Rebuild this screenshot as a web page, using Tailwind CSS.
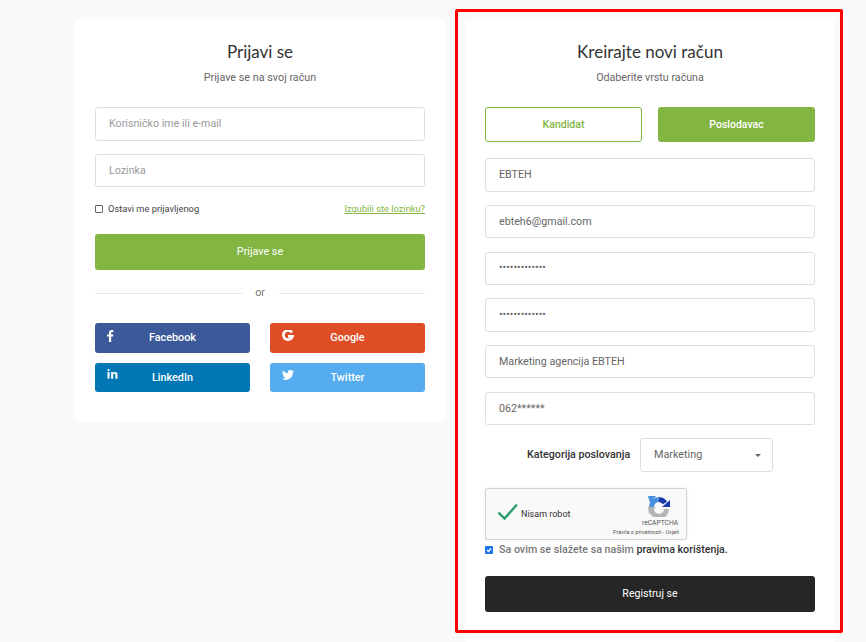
<!DOCTYPE html>
<html lang="sr">
<head>
    <meta charset="UTF-8">
    <meta name="viewport" content="width=device-width, initial-scale=1.0">
    <title>Prijava i registracija</title>
    <script src="https://cdn.jsdelivr.net/npm/@tailwindcss/browser@4"></script>
</head>
<body class="bg-[#fafafa] text-[#666] font-['Roboto',sans-serif]">

    <div class="relative h-[642px] w-[866px] overflow-hidden">
        <div class="flex items-start gap-[20px] pl-[75px] pt-[20px]">

            <!-- login -->
            <section class="h-[402px] w-[370px] rounded-[4px] bg-white px-[20px] pt-[20px]">
                <h2 class="text-center font-['Lato',sans-serif] text-[17px] leading-[24px] text-[#333]">Prijavi se</h2>
                <p class="mt-[6px] text-center text-[10.8px] leading-[16px] text-[#666]">Prijave se na svoj račun</p>

                <div class="mt-[21px] flex h-[34px] items-center rounded-[3px] border border-[#dedede] px-[13px] text-[10.7px] text-[#999]">Korisničko ime ili e-mail</div>
                <div class="mt-[13px] flex h-[33px] items-center rounded-[3px] border border-[#dedede] px-[13px] pt-px text-[10.7px] text-[#999]">Lozinka</div>

                <div class="mt-[15px] flex h-[14px] items-center justify-between text-[9.3px]">
                    <label class="flex items-center gap-[5px] text-[#444]">
                        <span class="h-[8px] w-[8px] rounded-[1px] border border-[#666] bg-white"></span>
                        Ostavi me prijavljenog
                    </label>
                    <a class="text-[#82b541] underline">Izgubili ste lozinku?</a>
                </div>

                <button class="mt-[18px] h-[36px] w-full rounded-[3px] bg-[#82b541] text-[10.8px] text-white">Prijave se</button>

                <div class="mt-[16px] flex h-[14px] items-center text-[10.7px] text-[#777]">
                    <span class="h-px flex-1 bg-[#e6e8f0]"></span>
                    <span class="w-[37px] text-center">or</span>
                    <span class="h-px flex-1 bg-[#e6e8f0]"></span>
                </div>

                <div class="mt-[23px] grid grid-cols-2 gap-x-[20px] gap-y-[10px]">
                    <a class="relative flex h-[30px] items-center justify-center rounded-[3px] bg-[#3c5a99] text-[10.8px] font-medium text-white">
                        <svg class="absolute left-[12px] top-[7px] h-[12px] w-[7px]" viewBox="0 0 8 14" fill="#fff"><path d="M2.2 14V7.7H0V5.2h2.2V3.3C2.2 1.1 3.500 0 5.400 0c.9 0 1.700.1 1.900.1v2.200H6c-1 0-1.200.5-1.200 1.200v1.700h2.500l-.3 2.500H4.800V14z"/></svg>
                        Facebook
                    </a>
                    <a class="relative flex h-[30px] items-center justify-center rounded-[3px] bg-[#de4d26] text-[10.8px] font-medium text-white">
                        <svg class="absolute left-[12px] top-[7px] h-[12px] w-[12px]" viewBox="0 0 12 12" fill="none" stroke="#fff" stroke-width="2.600"><path d="M10 2.400A4.700 4.700 0 1 0 10.600 6.400H6"/></svg>
                        Google
                    </a>
                    <a class="relative flex h-[29px] items-center justify-center rounded-[3px] bg-[#0177b5] pt-px text-[10.8px] font-medium text-white">
                        <svg class="absolute left-[12px] top-[6px] h-[10px] w-[11px]" viewBox="0 0 11 11" fill="#fff"><rect x="0" y="3.400" width="2.300" height="7.200"/><circle cx="1.150" cy="1.200" r="1.200"/><path d="M4 3.400h2.200v1c.4-.7 1.200-1.200 2.200-1.200 2 0 2.600 1.300 2.600 3.100v4.300H8.700V6.800c0-.9-.2-1.600-1.100-1.600s-1.300.7-1.300 1.600v3.800H4z"/></svg>
                        LinkedIn
                    </a>
                    <a class="relative flex h-[29px] items-center justify-center rounded-[3px] bg-[#55acee] pt-px text-[10.8px] font-medium text-white">
                        <svg class="absolute left-[12px] top-[7px] h-[10px] w-[12px]" viewBox="0 0 24 20" fill="#fff"><path d="M24 2.400c-.9.4-1.800.7-2.800.8 1-.6 1.800-1.600 2.200-2.700-1 .6-2 1-3.100 1.200A4.900 4.900 0 0 0 11.900 6.200C7.800 6 4.200 4 1.700.9c-1.300 2.300-.6 5.100 1.500 6.600-.8 0-1.600-.2-2.200-.6 0 2.400 1.700 4.400 3.900 4.900-.7.2-1.500.2-2.200.1.600 2 2.400 3.400 4.600 3.400A9.900 9.900 0 0 1 0 17.400 14 14 0 0 0 21.500 5c1-.7 1.800-1.600 2.500-2.600z"/></svg>
                        Twitter
                    </a>
                </div>
            </section>

            <!-- register -->
            <section class="h-[640px] w-[370px] rounded-[4px] bg-white px-[20px] pt-[20px]">
                <h2 class="text-center font-['Lato',sans-serif] text-[17px] leading-[24px] text-[#333]">Kreirajte novi račun</h2>
                <p class="mt-[6px] text-center text-[10.7px] leading-[16px] text-[#666]">Odaberite vrstu računa</p>

                <div class="mt-[21px] flex justify-between">
                    <button class="h-[35px] w-[157px] rounded-[3px] border border-[#82b541] bg-white text-[10.5px] font-medium text-[#82b541]">Kandidat</button>
                    <button class="h-[35px] w-[157px] rounded-[3px] bg-[#82b541] text-[10.5px] font-medium text-white">Poslodavac</button>
                </div>

                <div class="mt-[16px] flex h-[34px] items-center rounded-[3px] border border-[#dedede] px-[13px] pt-px text-[10.7px]">EBTEH</div>
                <div class="mt-[13px] flex h-[33px] items-center rounded-[3px] border border-[#dedede] px-[13px] pt-px text-[10.7px]">ebteh6@gmail.com</div>
                <div class="mt-[14px] flex h-[33px] items-center rounded-[3px] border border-[#dedede] px-[13px] text-[10.7px]">•••••••••••••</div>
                <div class="mt-[13px] flex h-[34px] items-center rounded-[3px] border border-[#dedede] px-[13px] text-[10.7px]">•••••••••••••</div>
                <div class="mt-[13px] flex h-[33px] items-center rounded-[3px] border border-[#dedede] px-[13px] pt-px text-[10.7px]">Marketing agencija EBTEH</div>
                <div class="mt-[14px] flex h-[33px] items-center rounded-[3px] border border-[#dedede] px-[13px] pt-px text-[10.7px]">062******</div>

                <div class="mt-[13px] flex h-[34px] items-center pl-[42px]">
                    <span class="w-[113px] text-[10.7px] font-medium text-[#333]">Kategorija poslovanja</span>
                    <div class="flex h-[34px] w-[133px] items-center justify-between rounded-[3px] border border-[#dedede] pl-[13px] pr-[11px] pt-px text-[10.8px]">
                        Marketing
                        <span class="h-0 w-0 border-x-[3px] border-t-[3px] border-x-transparent border-t-[#666]"></span>
                    </div>
                </div>

                <!-- captcha -->
                <div class="relative mt-[16px] h-[52px] w-[202px] rounded-[2px] border border-[#d3d3d3] bg-[#f9f9f9] shadow-[0_0_3px_rgba(0,0,0,0.08)]">
                    <svg class="absolute left-[11px] top-[14px] h-[18px] w-[22px]" viewBox="0 0 22 18" fill="none" stroke="#2a9d6a" stroke-width="2.400"><path d="M1.500 9.500 7.500 15.500 20 1.500"/></svg>
                    <span class="absolute left-[35px] top-[19px] text-[9px] leading-[13px] text-[#333]">Nisam robot</span>
                    <svg class="absolute left-[162px] top-[7px] h-[21px] w-[22px]" viewBox="0 0 22 21" fill="none">
                        <path d="M3.500 11A7.500 7.500 0 0 1 11 3.500" stroke="#4a90e2" stroke-width="5"/>
                        <path d="M0 0h8l-6 7z" fill="#4a90e2"/>
                        <path d="M11 3.500A7.500 7.500 0 0 1 17 7" stroke="#1c3aa9" stroke-width="5"/>
                        <path d="M22 11V4l-8 7z" fill="#1c3aa9"/>
                        <path d="M18.500 13A7.500 7.500 0 0 1 3.500 13" stroke="#b4b4b4" stroke-width="5"/>
                        <path d="M0 11h8l-7 7z" fill="#b4b4b4"/>
                    </svg>
                    <span class="absolute left-[156px] top-[29px] text-[6.700px] leading-[10px] text-[#555]">reCAPTCHA</span>
                    <span class="absolute left-[127px] top-[39px] whitespace-nowrap text-[5.500px] leading-[8px] text-[#555]">Pravila o privatnosti - Uvjeti</span>
                </div>

                <label class="mt-[3px] flex h-[14px] items-center text-[10.700px] font-medium text-[#777]">
                    <span class="mr-[6px] flex h-[8px] w-[8px] items-center justify-center rounded-[1px] bg-[#1a73e8]">
                        <svg class="h-[6px] w-[6px]" viewBox="0 0 6 6" fill="none" stroke="#fff" stroke-width="1.300"><path d="M1 3 2.500 4.500 5 1.500"/></svg>
                    </span>
                    Sa ovim se slažete sa našim&nbsp;<span class="text-[#333]">pravima korištenja.</span>
                </label>

                <button class="mt-[19px] h-[36px] w-full rounded-[3px] bg-[#262626] text-[10.600px] text-white">Registruj se</button>
            </section>
        </div>

        <!-- red highlight drawn over the screenshot -->
        <div class="absolute left-[455px] top-[9px] h-[624px] w-[388px] rounded-[2px] border-[3px] border-[#ff0000]"></div>
    </div>

</body>
</html>
